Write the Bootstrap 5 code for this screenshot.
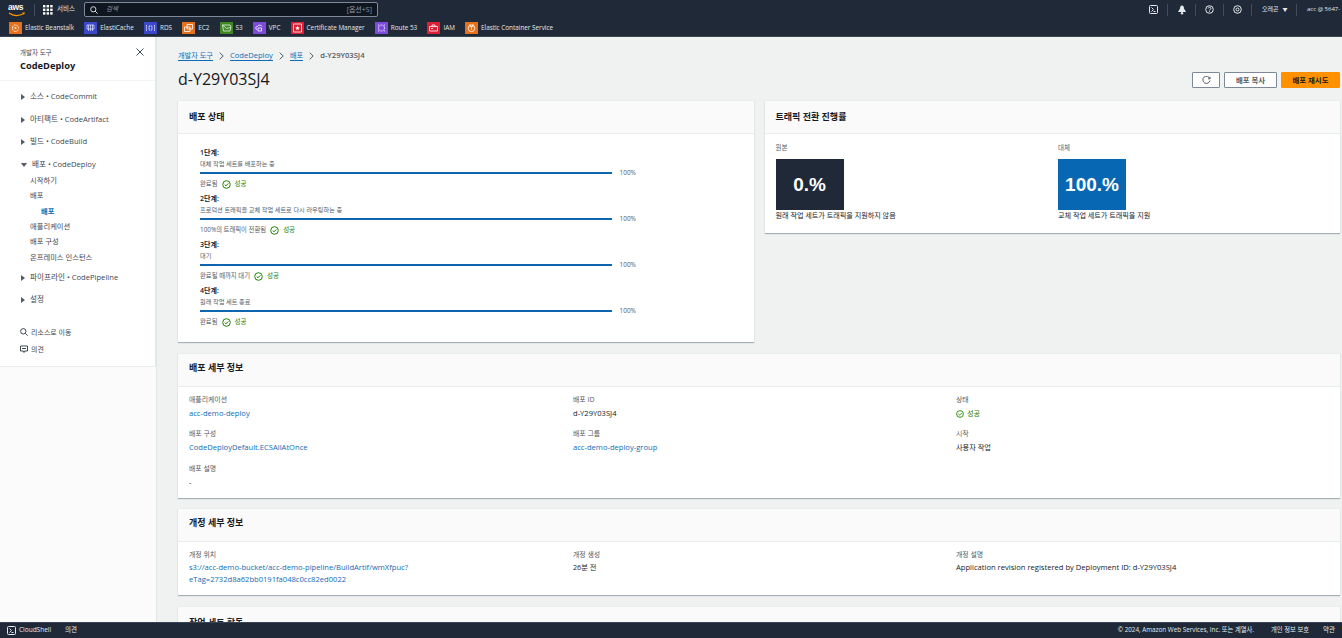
<!DOCTYPE html>
<html lang="ko">
<head>
<meta charset="utf-8">
<title>CodeDeploy</title>
<link href="https://cdn.jsdelivr.net/npm/bootstrap@5.3.0/dist/css/bootstrap.min.css" rel="stylesheet">
<style>
html,body{height:100%;overflow:hidden}
body{font-family:"Open Sans","Noto Sans CJK KR",sans-serif;font-size:7px;color:#16191f;background:#f2f3f3;line-height:1.3}
a{text-decoration:none;color:#0f6cb5}
.shell{height:638px}
.topbar{background:#1f2937;height:37px;color:#e5e9ee;flex:none;border-bottom:1px solid #3a4553}
.toprow{height:19px;padding-left:8px}
.favrow{height:17px;padding:1px 0 0 9px;gap:10.2px;font-size:6.35px}
.awslogo{width:18px;height:14px;position:relative;color:#fff;font:700 8.5px/9px "Liberation Sans",sans-serif;letter-spacing:-.3px}
.smile{top:9px}
.sep{width:1px;height:12px;background:#414d5c}
.svclabel{font-size:6.5px}
.searchbox{width:294px;height:15px;background:#10161f;border:1px solid #7d8998;border-radius:2px;margin-left:9px;padding:0 5px;color:#8d99a8;font-size:6.5px}
.searchkey{font-size:7px}
.fav{gap:3px;white-space:nowrap}
.favicon{width:13px;height:12px;display:block;flex:none}
.tool{width:27px}
.regionbox{width:44px;font-size:6px;padding-left:10px}
.regionarrow{font-size:5px}
.acctbox{width:45px;font-size:6px;padding-left:10px}
.sidewrap{width:157px;flex:none;background:#fbfbfb;border-right:1px solid #e4e7e7}
.sidenav{width:156px;background:#fff;border-right:1px solid #e6e9e9;height:329px;box-shadow:0 1px 0 #e9ebed}
.sidehead{height:44px;padding:11px 0 0 20px;border-bottom:1px solid #f2f3f3;position:relative}
.sidesup{font-size:6.5px;color:#414750;line-height:9px}
.sidetitle{font-size:9.3px;font-weight:700;margin-top:3px;line-height:12px}
.sideclose{position:absolute;left:136px;top:11px}
.navlist{padding-top:4.6px}
.navgroup{color:#414750;font-size:7.6px;height:22.7px;padding-left:21px;gap:5px}
.navgroupopen{height:16.7px;margin-top:2.5px}
.navgroupafter{margin-top:1px}
.caret{width:0;height:0;border-left:4px solid #545b64;border-top:3px solid transparent;border-bottom:3px solid transparent}
.caretdown{border-top:4px solid #545b64;border-left:3px solid transparent;border-right:3px solid transparent;border-bottom:0}
.navsub{padding-left:30px;height:15.4px;color:#414750;font-size:7.3px}
.navsub3{padding-left:41px;color:#0f6cb5;font-weight:600}
.navutil{height:17px;padding-left:20px;gap:3px;color:#414750;font-size:7px}
.navutilfirst{margin-top:12px}
.contentpane{padding:0 2px 0 21px;overflow:hidden;background:#f0f2f2}
.crumbs{height:31px;padding-top:14px;gap:6px;font-size:7.6px;color:#545b64}
.crumbs a{border-bottom:1px solid #0f6cb5;line-height:9px}
.crumbs a.crumbko{font-size:7.2px}
.crumbsep{margin-top:1px}
.crumbnow{font-weight:600;line-height:9px}
.pagetitle{font-size:16px;line-height:20px;font-weight:400;margin:0 0 2px;color:#16191f}
.titlerow{height:32px;padding-bottom:8px}
.titlebtns{gap:4px}
.awsbtn{height:16px;font-size:7.4px;font-weight:700;padding:0;border:1px solid #7d8998;background:#fff;color:#545b64;border-radius:1px;line-height:14px;--bs-btn-hover-bg:#fff}
.btnicon{width:28px}
.btncopy{width:53px}
.awsprimary{background:#ff9100;border-color:#ff9100;color:#16191f;width:59px}
.panel{background:#fff;border:0;border-top:1px solid #eaeded;box-shadow:0 1px 1px rgba(0,28,36,.3);border-radius:0;margin-bottom:11px}
.panelcompact{margin-bottom:10px}
.panelhead{height:33px;background:#fafafa;border-bottom:1px solid #eaeded;padding:0 0 1px 11px;font-size:9px;font-weight:700;display:flex;align-items:center;color:#16191f}
.panelheadup{padding-bottom:4px}
.panelrow{gap:11px}
.panelhalf{flex:1 1 0;min-width:0}
.stepwrap{padding:14px 0 0 22px;height:208px}
.stepbox{height:46px}
.steptitle{font-size:7px;line-height:9px;color:#16191f;font-weight:600}
.stepdesc{font-size:6.2px;line-height:9px;color:#545b64;height:11px;margin-top:1.5px}
.barline{gap:7px;height:7px;font-size:6.5px;color:#545b64;width:436px}
.barfill{height:2.5px;background:#0f66b0;flex:1}
.stepstat{font-size:6.35px;color:#545b64;gap:4px;height:13.5px;padding-top:2px}
.okay{color:#1d8102;gap:4px;font-size:6.5px}
.traffic{padding:9px 0 0 11px;height:99px}
.tbox{flex:0 0 282.5px}
.tlabel{font-size:6.5px;color:#545b64;height:10px;line-height:10px;margin-bottom:6px}
.tsquare{width:68px;height:51px;color:#fff;font:700 19px/51px "Liberation Sans",sans-serif;text-align:center}
.tdark{background:#1f2937}
.tblue{background:#0767b2}
.tnote{font-size:7.1px;line-height:11px;color:#16191f}
.dgrid{display:grid;grid-template-columns:384px 383px 1fr;padding:8px 0 0 11px}
.dgridlong{height:111px}
.dgridshort{height:53px}
.dcell{height:34px}
.dk{font-size:6.9px;color:#545b64;line-height:10px;margin-bottom:3px}
.dkshort{margin-bottom:2px}
.dv{font-size:7.6px;line-height:11px;color:#16191f}
.dvko{font-size:7.2px}
.dvok{gap:3px;color:#1d8102}
.revurl{line-height:11.5px}
.botbar{height:16px;background:#1f2937;color:#e5e9ee;flex:none;font-size:6.5px;padding:0 7px;border-top:1px solid #3a4553}
.cloudicon{margin-right:3px}
.botfeedback{margin-left:14px}
.botcopy{font-size:6.3px}
.botpriv{margin-left:17px;font-size:6.3px}
</style>
</head>
<body>
<div class="shell d-flex flex-column">
  <header class="topbar">
    <div class="toprow d-flex align-items-center">
      <div class="awslogo">aws<svg class="position-absolute start-0 smile" width="18" height="5" viewBox="0 0 18 5"><path d="M1 1c4 3 10 3 15 .5" fill="none" stroke="#f90" stroke-width="1.2"/><path d="M14 .6l3-.2-1 2.4" fill="#f90"/></svg></div>
      <span class="sep ms-2 me-2"></span>
      <svg class="me-1" width="10" height="10" viewBox="0 0 10 10" fill="#fff"><rect width="2.4" height="2.4"/><rect x="3.6" width="2.4" height="2.4"/><rect x="7.2" width="2.4" height="2.4"/><rect y="3.6" width="2.4" height="2.4"/><rect x="3.6" y="3.6" width="2.4" height="2.4"/><rect x="7.2" y="3.6" width="2.4" height="2.4"/><rect y="7.2" width="2.4" height="2.4"/><rect x="3.6" y="7.2" width="2.4" height="2.4"/><rect x="7.2" y="7.2" width="2.4" height="2.4"/></svg>
      <span class="svclabel">서비스</span>
      <div class="searchbox d-flex align-items-center">
        <svg class="me-2" width="8" height="8" viewBox="0 0 8 8" fill="none" stroke="#d5dbdb" stroke-width="1"><circle cx="3.3" cy="3.3" r="2.6"/><path d="M5.2 5.2L7.6 7.6"/></svg>
        <span class="fst-italic">검색</span><span class="ms-auto searchkey">[옵션+S]</span>
      </div>
      <div class="ms-auto d-flex align-items-center">
        <span class="tool d-flex justify-content-center"><svg width="9" height="9" viewBox="0 0 9 9" fill="none" stroke="#e5e9ee"><rect x=".5" y=".5" width="8" height="8" rx="1"/><path d="M2.5 2.500l2 2-2 2M4.500 6.500h2"/></svg></span><span class="sep"></span>
        <span class="tool d-flex justify-content-center"><svg width="10" height="10" viewBox="0 0 10 10" fill="#e5e9ee"><path d="M5 .5C3.500.5 3 2 3 3.500L1 7h8L7 3.500C7 2 6.500.5 5 .5z"/><circle cx="5" cy="8.300" r="1.200"/></svg></span><span class="sep"></span>
        <span class="tool d-flex justify-content-center"><svg width="9" height="9" viewBox="0 0 9 9" fill="none" stroke="#e5e9ee"><circle cx="4.500" cy="4.500" r="3.800"/><path d="M3.200 3.400c.2-1.500 2.700-1.400 2.700.1 0 1-1.400 1-1.400 2M4.500 6.300v.8"/></svg></span><span class="sep"></span>
        <span class="tool d-flex justify-content-center"><svg width="9" height="9" viewBox="0 0 9 9" fill="none" stroke="#e5e9ee"><circle cx="4.500" cy="4.500" r="3.800"/><circle cx="4.500" cy="4.500" r="1.500"/></svg></span><span class="sep"></span>
        <span class="regionbox d-flex align-items-center">오레곤<span class="ms-1 regionarrow">▼</span></span><span class="sep"></span>
        <span class="acctbox overflow-hidden text-nowrap">acc @ 5647-</span>
      </div>
    </div>
    <div class="favrow d-flex align-items-center">
      <span class="fav d-flex align-items-center"><svg class="favicon" viewBox="0 0 13 12"><rect width="13" height="12" fill="#e5711c"/><path d="M3.500 6a3 3 0 0 1 6 0M3.500 6.500a3 3 0 0 0 6 0" stroke="#fff" fill="none" stroke-width=".9" stroke-dasharray="2 .8"/><circle cx="6.500" cy="6" r="1" fill="#fff"/></svg>Elastic Beanstalk</span>
      <span class="fav d-flex align-items-center"><svg class="favicon" viewBox="0 0 13 12"><rect width="13" height="12" fill="#3b48cc"/><path d="M3 3h7v4H3zM4.500 7v2M6.500 7v2M8.500 7v2M4.500 3v4M6.500 3v4M8.500 3v4" stroke="#fff" fill="none" stroke-width=".6"/></svg>ElastiCache</span>
      <span class="fav d-flex align-items-center"><svg class="favicon" viewBox="0 0 13 12"><rect width="13" height="12" fill="#3b48cc"/><path d="M2.500 3v6M10.500 3v6M5 4h3v4H5z" stroke="#fff" fill="none" stroke-width=".8" stroke-dasharray="1.500 .7"/></svg>RDS</span>
      <span class="fav d-flex align-items-center"><svg class="favicon" viewBox="0 0 13 12"><rect width="13" height="12" fill="#e5711c"/><path d="M5 2.500h5.500v4.500H5zM2.500 5H8v4.500H2.500z" stroke="#fff" fill="none" stroke-width=".8"/></svg>EC2</span>
      <span class="fav d-flex align-items-center"><svg class="favicon" viewBox="0 0 13 12"><rect width="13" height="12" fill="#3f8624"/><path d="M2.500 3h7.500l1 2-1 4H3.500l-1-6zM2.500 3l4 3.500 4-1" stroke="#fff" fill="none" stroke-width=".7"/></svg>S3</span>
      <span class="fav d-flex align-items-center"><svg class="favicon" viewBox="0 0 13 12"><rect width="13" height="12" fill="#7d4bdc"/><path d="M4 7.500a1.500 1.500 0 0 1 .5-3 2.500 2.500 0 0 1 4.500 0M5 6h3.500v3H5z" stroke="#fff" fill="none" stroke-width=".8"/></svg>VPC</span>
      <span class="fav d-flex align-items-center"><svg class="favicon" viewBox="0 0 13 12"><rect width="13" height="12" fill="#dd1f36"/><path d="M2.500 2h8v8h-8z" stroke="#fff" fill="none" stroke-width=".8"/><path d="M6.500 3.800l.7 1.500 1.500.2-1.100 1.100.3 1.500-1.400-.8-1.400.8.300-1.500-1.100-1.100 1.500-.2z" fill="#fff"/></svg>Certificate Manager</span>
      <span class="fav d-flex align-items-center"><svg class="favicon" viewBox="0 0 13 12"><rect width="13" height="12" fill="#7d4bdc"/><circle cx="6.500" cy="6" r="3" stroke="#fff" fill="none" stroke-width=".8" stroke-dasharray="1.500 .6"/><path d="M3 3h1M9 3h1M3 9h1M9 9h1" stroke="#fff" stroke-width=".8"/></svg>Route 53</span>
      <span class="fav d-flex align-items-center"><svg class="favicon" viewBox="0 0 13 12"><rect width="13" height="12" fill="#dd1f36"/><path d="M2.500 4.500h8v4.500h-8zM5 4.500V3h3v1.500M4 6.500h2" stroke="#fff" fill="none" stroke-width=".8"/></svg>IAM</span>
      <span class="fav d-flex align-items-center"><svg class="favicon" viewBox="0 0 13 12"><rect width="13" height="12" fill="#e5711c"/><circle cx="6.500" cy="6.300" r="3.300" stroke="#fff" fill="none" stroke-width=".8"/><path d="M5 2v2.500h3V2M6.500 4.500v3.500" stroke="#fff" fill="none" stroke-width=".7"/></svg>Elastic Container Service</span>
    </div>
  </header>

  <div class="d-flex flex-grow-1 overflow-hidden">
    <div class="sidewrap">
      <nav class="sidenav">
        <div class="sidehead">
          <div class="sidesup">개발자 도구</div>
          <div class="sidetitle">CodeDeploy</div>
          <svg class="sideclose" width="8" height="8" viewBox="0 0 8 8" stroke="#414750" fill="none"><path d="M.5.500l7 7M7.500.500l-7 7"/></svg>
        </div>
        <div class="navlist">
          <div class="navgroup d-flex align-items-center"><span class="caret"></span>소스 • CodeCommit</div>
          <div class="navgroup d-flex align-items-center"><span class="caret"></span>아티팩트 • CodeArtifact</div>
          <div class="navgroup d-flex align-items-center"><span class="caret"></span>빌드 • CodeBuild</div>
          <div class="navgroup navgroupopen d-flex align-items-center"><span class="caret caretdown"></span>배포 • CodeDeploy</div>
          <div class="navsub d-flex align-items-center">시작하기</div>
          <div class="navsub d-flex align-items-center">배포</div>
          <div class="navsub navsub3 d-flex align-items-center">배포</div>
          <div class="navsub d-flex align-items-center">애플리케이션</div>
          <div class="navsub d-flex align-items-center">배포 구성</div>
          <div class="navsub d-flex align-items-center">온프레미스 인스턴스</div>
          <div class="navgroup navgroupafter d-flex align-items-center"><span class="caret"></span>파이프라인 • CodePipeline</div>
          <div class="navgroup d-flex align-items-center"><span class="caret"></span>설정</div>
          <div class="navutil navutilfirst d-flex align-items-center"><svg width="8" height="8" viewBox="0 0 8 8" fill="none" stroke="#414750"><circle cx="3.300" cy="3.300" r="2.700"/><path d="M5.300 5.300L7.700 7.700"/></svg>리소스로 이동</div>
          <div class="navutil d-flex align-items-center"><svg width="8" height="8" viewBox="0 0 8 8" fill="none" stroke="#414750"><path d="M.5 1h7v5h-3L4 7.500 3.500 6h-3zM2 3.500h4"/></svg>의견</div>
        </div>
      </nav>
    </div>

    <main class="contentpane flex-grow-1">
      <div class="crumbs d-flex align-items-start">
        <a class="crumbko" href="#">개발자 도구</a><svg class="crumbsep" width="5" height="8" viewBox="0 0 5 8" fill="none" stroke="#545b64"><path d="M.7.700L4.200 4 .7 7.300"/></svg><a href="#">CodeDeploy</a><svg class="crumbsep" width="5" height="8" viewBox="0 0 5 8" fill="none" stroke="#545b64"><path d="M.7.700L4.200 4 .7 7.300"/></svg><a class="crumbko" href="#">배포</a><svg class="crumbsep" width="5" height="8" viewBox="0 0 5 8" fill="none" stroke="#545b64"><path d="M.7.700L4.200 4 .7 7.300"/></svg><span class="crumbnow">d-Y29Y03SJ4</span>
      </div>
      <div class="titlerow d-flex align-items-center">
        <h1 class="pagetitle">d-Y29Y03SJ4</h1>
        <div class="ms-auto d-flex titlebtns">
          <button class="btn awsbtn btnicon d-flex align-items-center justify-content-center" aria-label="새로 고침"><svg width="9" height="9" viewBox="0 0 9 9" fill="none" stroke="#545b64"><path d="M7.800 2.500A3.600 3.600 0 1 0 8 4.500M8 .8v2H6"/></svg></button>
          <button class="btn awsbtn btncopy">배포 복사</button>
          <button class="btn awsbtn awsprimary">배포 재시도</button>
        </div>
      </div>

      <div class="panelrow d-flex align-items-start">
        <section class="panel panelhalf">
          <div class="panelhead">배포 상태</div>
          <div class="stepwrap">
            <div class="stepbox"><div class="steptitle">1단계:</div><div class="stepdesc">대체 작업 세트를 배포하는 중</div><div class="barline d-flex align-items-center"><span class="barfill"></span><span>100%</span></div><div class="stepstat d-flex align-items-center">완료됨 <span class="okay d-flex align-items-center"><svg width="9" height="9" viewBox="0 0 9 9" fill="none" stroke="#1d8102"><circle cx="4.500" cy="4.500" r="3.800"/><path d="M2.700 4.500l1.300 1.300 2.300-2.400"/></svg>성공</span></div></div>
            <div class="stepbox"><div class="steptitle">2단계:</div><div class="stepdesc">프로덕션 트래픽을 교체 작업 세트로 다시 라우팅하는 중</div><div class="barline d-flex align-items-center"><span class="barfill"></span><span>100%</span></div><div class="stepstat d-flex align-items-center">100%의 트래픽이 전환됨 <span class="okay d-flex align-items-center"><svg width="9" height="9" viewBox="0 0 9 9" fill="none" stroke="#1d8102"><circle cx="4.500" cy="4.500" r="3.800"/><path d="M2.700 4.500l1.300 1.300 2.300-2.400"/></svg>성공</span></div></div>
            <div class="stepbox"><div class="steptitle">3단계:</div><div class="stepdesc">대기</div><div class="barline d-flex align-items-center"><span class="barfill"></span><span>100%</span></div><div class="stepstat d-flex align-items-center">완료될 때까지 대기 <span class="okay d-flex align-items-center"><svg width="9" height="9" viewBox="0 0 9 9" fill="none" stroke="#1d8102"><circle cx="4.500" cy="4.500" r="3.800"/><path d="M2.700 4.500l1.300 1.300 2.300-2.400"/></svg>성공</span></div></div>
            <div class="stepbox"><div class="steptitle">4단계:</div><div class="stepdesc">원래 작업 세트 종료</div><div class="barline d-flex align-items-center"><span class="barfill"></span><span>100%</span></div><div class="stepstat d-flex align-items-center">완료됨 <span class="okay d-flex align-items-center"><svg width="9" height="9" viewBox="0 0 9 9" fill="none" stroke="#1d8102"><circle cx="4.500" cy="4.500" r="3.800"/><path d="M2.700 4.500l1.300 1.300 2.300-2.400"/></svg>성공</span></div></div>
          </div>
        </section>
        <section class="panel panelhalf">
          <div class="panelhead">트래픽 전환 진행률</div>
          <div class="traffic d-flex">
            <div class="tbox"><div class="tlabel">원본</div><div class="tsquare tdark">0.%</div><div class="tnote">원래 작업 세트가 트래픽을 지원하지 않음</div></div>
            <div class="tbox"><div class="tlabel">대체</div><div class="tsquare tblue">100.%</div><div class="tnote">교체 작업 세트가 트래픽을 지원</div></div>
          </div>
        </section>
      </div>

      <section class="panel panelcompact">
        <div class="panelhead panelheadup">배포 세부 정보</div>
        <div class="dgrid dgridlong">
          <div class="dcell"><div class="dk">애플리케이션</div><div class="dv"><a href="#">acc-demo-deploy</a></div></div>
          <div class="dcell"><div class="dk">배포 ID</div><div class="dv">d-Y29Y03SJ4</div></div>
          <div class="dcell"><div class="dk">상태</div><div class="dv dvok dvko d-flex align-items-center"><svg width="8" height="8" viewBox="0 0 9 9" fill="none" stroke="#1d8102"><circle cx="4.500" cy="4.500" r="3.800"/><path d="M2.700 4.500l1.300 1.300 2.300-2.400"/></svg>성공</div></div>
          <div class="dcell"><div class="dk">배포 구성</div><div class="dv"><a href="#">CodeDeployDefault.ECSAllAtOnce</a></div></div>
          <div class="dcell"><div class="dk">배포 그룹</div><div class="dv"><a href="#">acc-demo-deploy-group</a></div></div>
          <div class="dcell"><div class="dk">시작</div><div class="dv dvko">사용자 작업</div></div>
          <div class="dcell"><div class="dk">배포 설명</div><div class="dv">-</div></div>
        </div>
      </section>

      <section class="panel">
        <div class="panelhead panelheadup">개정 세부 정보</div>
        <div class="dgrid dgridshort">
          <div><div class="dk dkshort">개정 위치</div><div class="dv revurl"><a href="#">s3://acc-demo-bucket/acc-demo-pipeline/BuildArtif/wmXfpuc?<br>eTag=2732d8a62bb0191fa048c0cc82ed0022</a></div></div>
          <div><div class="dk dkshort">개정 생성</div><div class="dv dvko">26분 전</div></div>
          <div><div class="dk dkshort">개정 설명</div><div class="dv">Application revision registered by Deployment ID: d-Y29Y03SJ4</div></div>
        </div>
      </section>

      <section class="panel">
        <div class="panelhead">작업 세트 활동</div>
      </section>
    </main>
  </div>

  <footer class="botbar d-flex align-items-center">
    <svg class="cloudicon" width="9" height="9" viewBox="0 0 9 9" fill="none" stroke="#e5e9ee"><rect x=".5" y=".5" width="8" height="8" rx="1"/><path d="M2.500 2.500l2 2-2 2M4.500 6.500h2"/></svg>
    <span>CloudShell</span><span class="botfeedback">의견</span>
    <span class="ms-auto botcopy">© 2024, Amazon Web Services, Inc. 또는 계열사.</span>
    <span class="botpriv">개인 정보 보호</span><span class="botfeedback">약관</span>
  </footer>
</div>
<script src="https://cdn.jsdelivr.net/npm/bootstrap@5.3.0/dist/js/bootstrap.bundle.min.js"></script>
</body>
</html>
